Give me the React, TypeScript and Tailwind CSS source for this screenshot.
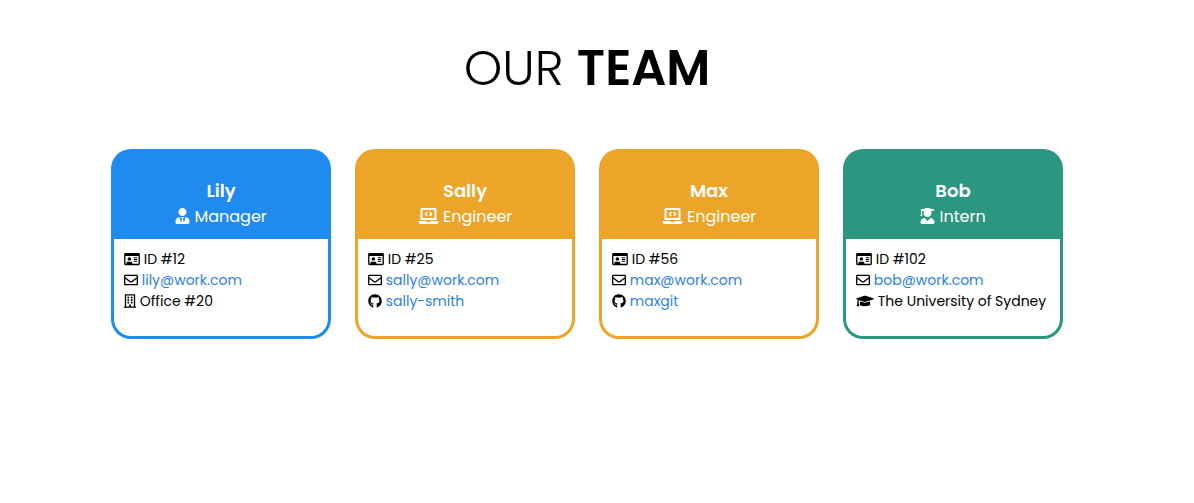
import React from 'react';
import { FaUserTie, FaLaptopCode, FaUserGraduate, FaRegIdCard, FaRegEnvelope, FaRegBuilding, FaGithub, FaGraduationCap } from 'react-icons/fa';
import type { IconType } from 'react-icons';

type Member = {
  name: string;
  role: string;
  RoleIcon: IconType;
  roleIconWidth: string;
  id: number;
  email: string;
  extra: { Icon: IconType; width: string; text: string; href?: string };
  fill: string;
};

const team: Member[] = [
  { name: 'Lily', role: 'Manager', RoleIcon: FaUserTie, roleIconWidth: 'w-[15px]', id: 12, email: 'lily@work.com', extra: { Icon: FaRegBuilding, width: 'w-3', text: 'Office #20' }, fill: 'bg-[#208bef]' },
  { name: 'Sally', role: 'Engineer', RoleIcon: FaLaptopCode, roleIconWidth: 'w-[21px]', id: 25, email: 'sally@work.com', extra: { Icon: FaGithub, width: 'w-[14px]', text: 'sally-smith', href: 'https://github.com/sally-smith' }, fill: 'bg-[#eca429]' },
  { name: 'Max', role: 'Engineer', RoleIcon: FaLaptopCode, roleIconWidth: 'w-[21px]', id: 56, email: 'max@work.com', extra: { Icon: FaGithub, width: 'w-[14px]', text: 'maxgit', href: 'https://github.com/maxgit' }, fill: 'bg-[#eca429]' },
  { name: 'Bob', role: 'Intern', RoleIcon: FaUserGraduate, roleIconWidth: 'w-[15px]', id: 102, email: 'bob@work.com', extra: { Icon: FaGraduationCap, width: 'w-[18px]', text: 'The University of Sydney' }, fill: 'bg-[#2b9781]' },
];

function Card({ name, role, RoleIcon, roleIconWidth, id, email, extra, fill }: Member) {
  return (
    <article className={`flex min-h-[190px] w-[220px] flex-col rounded-[20px] p-[3px] ${fill}`}>
      <header className="pt-[26px] pb-[9px] text-center text-white">
        <h2 className="text-lg leading-[26px] font-semibold">{name}</h2>
        <p className="text-base leading-[26px]"><RoleIcon className={`inline-block h-4 align-[-2px] ${roleIconWidth}`} /> {role}</p>
      </header>
      <ul className="grow rounded-b-[17px] bg-white px-[10px] pt-[10px] text-sm leading-[21px] whitespace-nowrap">
        <li><FaRegIdCard className="inline-block h-[14px] w-4 align-[-2px]" /> ID #{id}</li>
        <li><FaRegEnvelope className="inline-block h-[14px] w-[14px] align-[-2px]" /> <a className="text-[#2b82e3]" href={`mailto:${email}`}>{email}</a></li>
        <li><extra.Icon className={`inline-block h-[14px] align-[-2px] ${extra.width}`} /> {extra.href ? <a className="text-[#2b82e3]" href={extra.href}>{extra.text}</a> : extra.text}</li>
      </ul>
    </article>
  );
}

export default function App() {
  return (
    <main className="bg-white pr-5 font-[Poppins,Lato,sans-serif] text-black">
      <h1 className="pt-8 text-center text-[49px] leading-[73px] font-light">OUR <strong className="font-semibold">TEAM</strong></h1>
      <section className="mt-11 flex flex-wrap justify-center gap-6">
        {team.map((member) => <Card key={member.name} {...member} />)}
      </section>
    </main>
  );
}
